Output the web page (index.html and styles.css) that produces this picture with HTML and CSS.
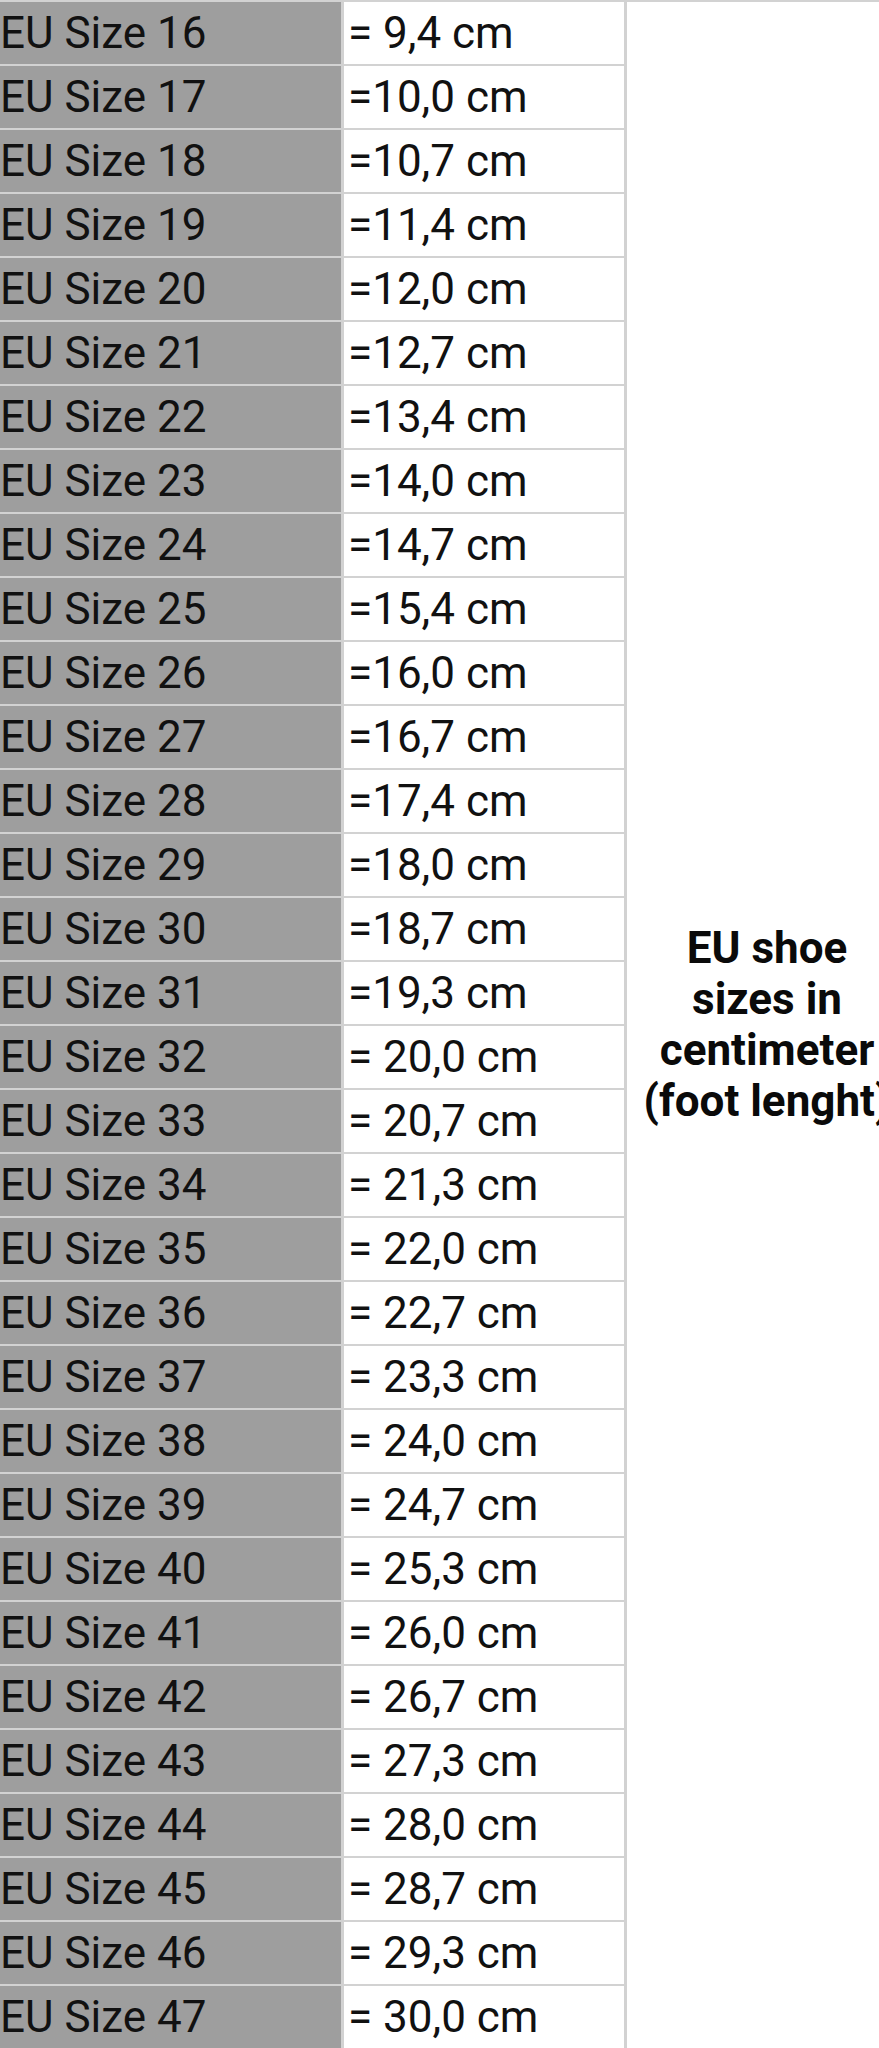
FILE: index.html
```html
<!DOCTYPE html>
<html lang="en">
<head>
<meta charset="utf-8">
<title>EU shoe sizes</title>
<link rel="stylesheet" href="styles.css">
</head>
<body>
<div class="viewport">
  <div class="sizes">
    <div class="size">EU Size 16</div><div class="cm">= 9,4 cm</div>
    <div class="note">EU shoe sizes in centimeter (foot lenght)</div>
    <div class="size">EU Size 17</div><div class="cm">=10,0 cm</div>
    <div class="size">EU Size 18</div><div class="cm">=10,7 cm</div>
    <div class="size">EU Size 19</div><div class="cm">=11,4 cm</div>
    <div class="size">EU Size 20</div><div class="cm">=12,0 cm</div>
    <div class="size">EU Size 21</div><div class="cm">=12,7 cm</div>
    <div class="size">EU Size 22</div><div class="cm">=13,4 cm</div>
    <div class="size">EU Size 23</div><div class="cm">=14,0 cm</div>
    <div class="size">EU Size 24</div><div class="cm">=14,7 cm</div>
    <div class="size">EU Size 25</div><div class="cm">=15,4 cm</div>
    <div class="size">EU Size 26</div><div class="cm">=16,0 cm</div>
    <div class="size">EU Size 27</div><div class="cm">=16,7 cm</div>
    <div class="size">EU Size 28</div><div class="cm">=17,4 cm</div>
    <div class="size">EU Size 29</div><div class="cm">=18,0 cm</div>
    <div class="size">EU Size 30</div><div class="cm">=18,7 cm</div>
    <div class="size">EU Size 31</div><div class="cm">=19,3 cm</div>
    <div class="size">EU Size 32</div><div class="cm">= 20,0 cm</div>
    <div class="size">EU Size 33</div><div class="cm">= 20,7 cm</div>
    <div class="size">EU Size 34</div><div class="cm">= 21,3 cm</div>
    <div class="size">EU Size 35</div><div class="cm">= 22,0 cm</div>
    <div class="size">EU Size 36</div><div class="cm">= 22,7 cm</div>
    <div class="size">EU Size 37</div><div class="cm">= 23,3 cm</div>
    <div class="size">EU Size 38</div><div class="cm">= 24,0 cm</div>
    <div class="size">EU Size 39</div><div class="cm">= 24,7 cm</div>
    <div class="size">EU Size 40</div><div class="cm">= 25,3 cm</div>
    <div class="size">EU Size 41</div><div class="cm">= 26,0 cm</div>
    <div class="size">EU Size 42</div><div class="cm">= 26,7 cm</div>
    <div class="size">EU Size 43</div><div class="cm">= 27,3 cm</div>
    <div class="size">EU Size 44</div><div class="cm">= 28,0 cm</div>
    <div class="size">EU Size 45</div><div class="cm">= 28,7 cm</div>
    <div class="size">EU Size 46</div><div class="cm">= 29,3 cm</div>
    <div class="size">EU Size 47</div><div class="cm">= 30,0 cm</div>
  </div>
</div>
</body>
</html>
```

FILE: styles.css
```css
html, body {
  margin: 0;
  padding: 0;
  background: #ffffff;
}

.viewport {
  width: 879px;
  height: 2048px;
  overflow: hidden;
}

.sizes {
  display: grid;
  grid-template-columns: 341px 280px 280px;
  grid-auto-rows: 62px;
  column-gap: 3px;
  row-gap: 2px;
  padding-top: 2px;
  width: max-content;
  background: #d2d2d2;
  font-family: Roboto, "Liberation Sans", sans-serif;
  font-size: 44px;
  color: #111111;
}

.size {
  grid-column: 1;
  background: #9e9e9e;
  line-height: 62px;
  white-space: nowrap;
  overflow: hidden;
}

.cm {
  grid-column: 2;
  background: #ffffff;
  line-height: 62px;
  padding-left: 4px;
  white-space: nowrap;
  overflow: hidden;
}

.note {
  grid-column: 3;
  grid-row: 1 / span 32;
  background: #ffffff;
  display: flex;
  align-items: center;
  justify-content: center;
  text-align: center;
  font-weight: 700;
  font-size: 44px;
  line-height: 51px;
  padding: 0 10px;
  color: #0a0a0a;
}
```
